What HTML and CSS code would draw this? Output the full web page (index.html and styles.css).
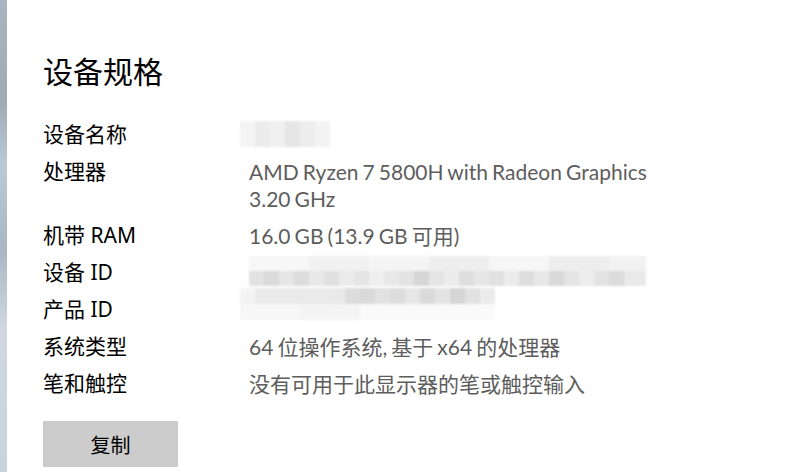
FILE: index.html
```html
<!DOCTYPE html>
<html lang="zh-CN">
<head>
    <meta charset="UTF-8">
    <title>设备规格</title>
    <link rel="stylesheet" href="styles.css">
</head>
<body>
    <div class="window">
        <div class="side-strip"></div>
        <main class="specs">
            <h2>设备规格</h2>
            <dl class="spec-list">
                <div class="spec-row">
                    <dt>设备名称</dt>
                    <dd><div class="mosaic mosaic-name"></div></dd>
                </div>
                <div class="spec-row">
                    <dt>处理器</dt>
                    <dd>AMD Ryzen 7 5800H with Radeon Graphics<br>3.20 GHz</dd>
                </div>
                <div class="spec-row">
                    <dt>机带 RAM</dt>
                    <dd>16.0 GB (13.9 GB 可用)</dd>
                </div>
                <div class="spec-row">
                    <dt>设备 ID</dt>
                    <dd><div class="mosaic mosaic-device"><span class="mosaic-top"></span><span class="mosaic-bottom"></span></div></dd>
                </div>
                <div class="spec-row">
                    <dt>产品 ID</dt>
                    <dd><div class="mosaic mosaic-product"><span class="mosaic-top"></span><span class="mosaic-bottom"></span></div></dd>
                </div>
                <div class="spec-row">
                    <dt>系统类型</dt>
                    <dd>64 位操作系统, 基于 x64 的处理器</dd>
                </div>
                <div class="spec-row">
                    <dt>笔和触控</dt>
                    <dd>没有可用于此显示器的笔或触控输入</dd>
                </div>
            </dl>
            <button class="copy-btn">复制</button>
        </main>
    </div>
</body>
</html>
```

FILE: styles.css
```css
* {
    margin: 0;
    padding: 0;
    box-sizing: border-box;
}

body {
    background: #ffffff;
    font-family: "Noto Sans", "Noto Sans CJK SC", sans-serif;
    overflow: hidden;
}

.window {
    display: flex;
    height: 472px;
}

.side-strip {
    width: 7px;
    flex-shrink: 0;
    background: linear-gradient(180deg, #a9b5c0 0px, #a0aab4 100px, #b9c9d6 165px, #aab7c3 250px, #cfd8e0 330px, #c7d4de 472px);
}

.specs {
    padding: 50px 0 0 36px;
}

h2 {
    font-family: "Noto Sans CJK SC", sans-serif;
    font-size: 30px;
    font-weight: 400;
    line-height: 40px;
    color: #000;
    margin-bottom: 31px;
}

.spec-row {
    display: flex;
    margin-bottom: 10px;
    font-size: 21px;
    line-height: 27px;
}

dt {
    width: 206px;
    flex-shrink: 0;
    color: #000;
}

dd {
    color: #5d5d5d;
    font-family: "Lato", "Noto Sans CJK SC", sans-serif;
    word-spacing: -1.3px;
}

.mosaic {
    filter: blur(0.8px);
}

.mosaic-name {
    width: 90px;
    height: 26px;
    margin-left: -9px;
    background: linear-gradient(90deg, #f4f4f4 0 15px, #ececec 15px 30px, #f0f0f0 30px 45px, #e6e6e6 45px 60px, #ededed 60px 75px, #f3f3f3 75px 90px);
}

.mosaic-device {
    width: 397px;
    height: 30px;
    margin-top: -3px;
    margin-bottom: -1px;
    display: flex;
    flex-direction: column;
}

.mosaic-top,
.mosaic-bottom {
    display: block;
    flex: 1;
}

.mosaic-device .mosaic-top {
    background: linear-gradient(90deg, #f7f7f7 0 60px, #f1f1f1 60px 120px, #f4f4f4 120px 180px, #eeeeee 180px 240px, #f6f6f6 240px 300px, #ededed 300px 360px, #f2f2f2 360px 397px);
}

.mosaic-device .mosaic-bottom {
    background: linear-gradient(90deg, #e2e2e2 0 15px, #dadada 15px 30px, #e6e6e6 30px 45px, #dcdcdc 45px 60px, #e8e8e8 60px 75px, #e0e0e0 75px 90px, #ebebeb 90px 105px, #e4e4e4 105px 120px, #efefef 120px 135px, #e8e8e8 135px 150px, #e3e3e3 150px 165px, #d6d6d6 165px 180px, #e5e5e5 180px 195px, #ececec 195px 210px, #dedede 210px 225px, #e6e6e6 225px 240px, #e1e1e1 240px 255px, #ebebeb 255px 270px, #dddddd 270px 285px, #e7e7e7 285px 300px, #d9d9d9 300px 315px, #e4e4e4 315px 330px, #ededed 330px 345px, #e3e3e3 345px 360px, #dcdcdc 360px 375px, #e9e9e9 375px 397px);
}

.mosaic-product {
    width: 255px;
    height: 32px;
    margin-left: -9px;
    margin-top: -8px;
    margin-bottom: -5px;
    display: flex;
    flex-direction: column;
}

.mosaic-product .mosaic-top {
    background: linear-gradient(90deg, #f3f3f3 0 15px, #eaeaea 15px 90px, #e9e9e9 90px 105px, #dcdcdc 105px 120px, #d9d9d9 120px 135px, #e2e2e2 135px 150px, #dddddd 150px 165px, #e6e6e6 165px 180px, #dadada 180px 195px, #e4e4e4 195px 210px, #d5d5d5 210px 225px, #e2e2e2 225px 240px, #ececec 240px 255px);
}

.mosaic-product .mosaic-bottom {
    background: linear-gradient(90deg, #f7f7f7 0 60px, #f4f4f4 60px 120px, #fafafa 120px 255px);
}

.copy-btn {
    display: block;
    margin-top: 24px;
    width: 135px;
    height: 46px;
    border: none;
    background: #cccccc;
    color: #000;
    font-family: "Noto Sans CJK SC", sans-serif;
    font-size: 20px;
    cursor: pointer;
}
```
